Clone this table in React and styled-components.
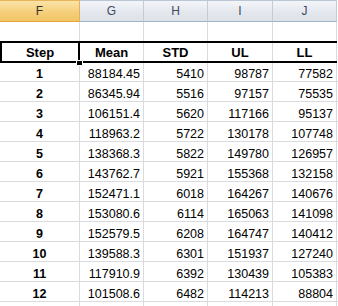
import React from "react";
import styled, { createGlobalStyle } from "styled-components";

const Global = createGlobalStyle`
  html, body { margin: 0; padding: 0; background: #fff; }
  body { font-family: "Liberation Sans", Arial, sans-serif; }
`;

const COLS = "80px 64px 64px 65px 64px";
const GRID = "#d9dbde";

const Sheet = styled.div`
  width: 338px;
  height: 306px;
  overflow: hidden;
  background: #fff;
  display: flex;
  flex-direction: column;
`;

const HeaderBar = styled.div`
  display: grid;
  grid-template-columns: ${COLS};
  height: 22px;
  box-sizing: border-box;
  flex: none;
`;

const ColHead = styled.div`
  box-sizing: border-box;
  border-top: 1px solid ${(p) => (p.$selected ? "#e8b45a" : "#b9c6d6")};
  border-bottom: 1px solid ${(p) => (p.$selected ? "#e0a53c" : "#9eb2c8")};
  border-right: 1px solid ${(p) => (p.$selected ? "#e3b062" : "#c3cbd6")};
  background: ${(p) =>
    p.$selected
      ? "linear-gradient(#fae3a8, #f6cf7c 55%, #f2c464)"
      : "linear-gradient(#f3f5f8, #e4e8ee 55%, #dde2e9)"};
  color: ${(p) => (p.$selected ? "#2f2f2f" : "#3f4b5c")};
  font-size: 12px;
  line-height: 14px;
  display: flex;
  align-items: center;
  justify-content: center;
`;

const Row = styled.div`
  display: grid;
  grid-template-columns: ${COLS};
  height: ${(p) => p.$h}px;
  box-sizing: border-box;
  border-bottom: ${(p) => (p.$noLine ? "none" : `1px solid ${GRID}`)};
  flex: none;
`;

const TitleRow = styled.div`
  display: grid;
  grid-template-columns: ${COLS};
  height: 22px;
  box-sizing: border-box;
  border-top: 2px solid #000;
  border-bottom: 2px solid #000;
  width: 337px;
  flex: none;
`;

const Cell = styled.div`
  box-sizing: border-box;
  border-right: 1px solid ${GRID};
  display: flex;
  align-items: flex-end;
  justify-content: ${(p) => (p.$center ? "center" : "flex-end")};
  padding-right: ${(p) => (p.$center ? 0 : 3)}px;
  font-size: 12.5px;
  line-height: 14px;
  font-weight: ${(p) => (p.$bold ? 700 : 400)};
  color: #000;
  white-space: nowrap;
`;

const TitleCell = styled(Cell)`
  padding-bottom: 1px;
  font-size: 13px;
`;

const ActiveCell = styled(TitleCell)`
  position: relative;
  border-left: 2px solid #000;
  border-right: 2px solid #000;
  margin-top: -1px;
  margin-bottom: -1px;
  padding-bottom: 2px;
`;

const FillHandle = styled.span`
  position: absolute;
  right: -5px;
  bottom: -4px;
  width: 5px;
  height: 4px;
  background: #000;
  border: 1px solid #fff;
  border-radius: 1px;
  z-index: 2;
`;

const data = [
  [1, "88184.45", 5410, 98787, 77582],
  [2, "86345.94", 5516, 97157, 75535],
  [3, "106151.4", 5620, 117166, 95137],
  [4, "118963.2", 5722, 130178, 107748],
  [5, "138368.3", 5822, 149780, 126957],
  [6, "143762.7", 5921, 155368, 132158],
  [7, "152471.1", 6018, 164267, 140676],
  [8, "153080.6", 6114, 165063, 141098],
  [9, "152579.5", 6208, 164747, 140412],
  [10, "139588.3", 6301, 151937, 127240],
  [11, "117910.9", 6392, 130439, 105383],
  [12, "101508.6", 6482, 114213, 88804],
];

export default function App() {
  return (
    <>
      <Global />
      <Sheet>
        <HeaderBar>
          <ColHead $selected>F</ColHead>
          <ColHead>G</ColHead>
          <ColHead>H</ColHead>
          <ColHead>I</ColHead>
          <ColHead>J</ColHead>
        </HeaderBar>
        <Row $h={19} $noLine>
          <Cell />
          <Cell />
          <Cell />
          <Cell />
          <Cell />
        </Row>
        <TitleRow>
          <ActiveCell $center $bold>
            Step
            <FillHandle />
          </ActiveCell>
          <TitleCell $center $bold>Mean</TitleCell>
          <TitleCell $center $bold>STD</TitleCell>
          <TitleCell $center $bold>UL</TitleCell>
          <TitleCell $center $bold>LL</TitleCell>
        </TitleRow>
        {data.map((r, i) => (
          <Row key={r[0]} $h={i === 0 ? 19 : 20}>
            <Cell $center $bold>{r[0]}</Cell>
            <Cell>{r[1]}</Cell>
            <Cell>{r[2]}</Cell>
            <Cell>{r[3]}</Cell>
            <Cell>{r[4]}</Cell>
          </Row>
        ))}
        <Row $h={20}>
          <Cell />
          <Cell />
          <Cell />
          <Cell />
          <Cell />
        </Row>
      </Sheet>
    </>
  );
}
